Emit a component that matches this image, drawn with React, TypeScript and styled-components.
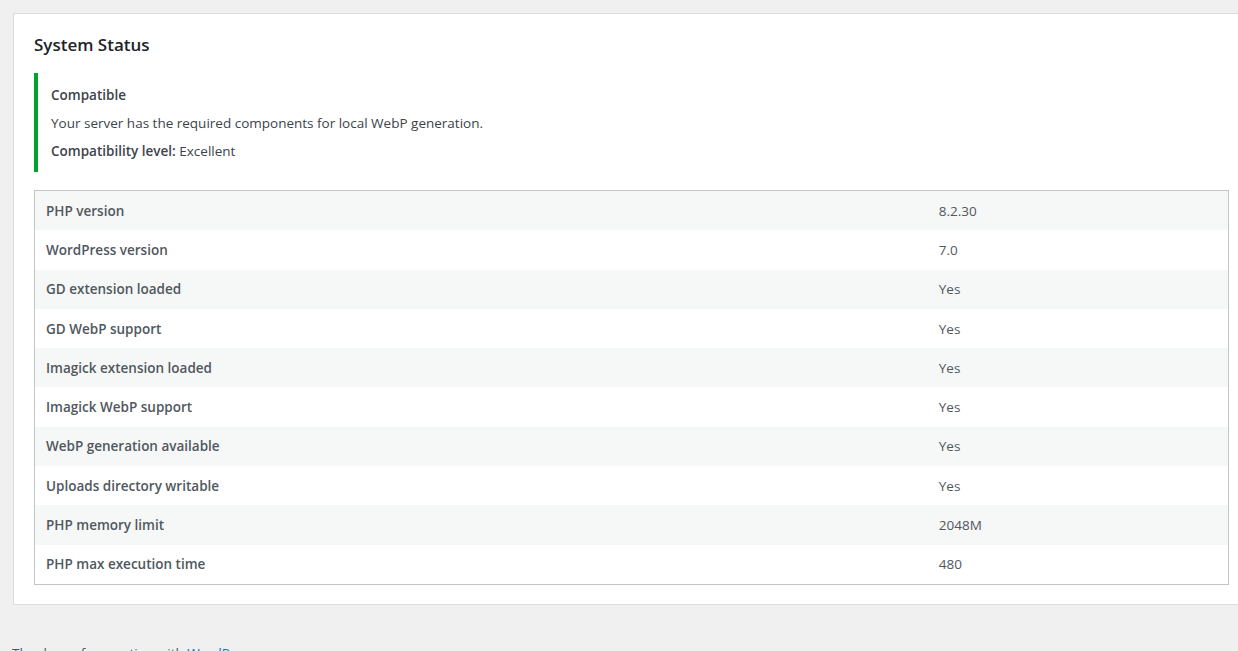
import React from "react";
import styled, { createGlobalStyle } from "styled-components";

const Global = createGlobalStyle`
  html, body { margin: 0; padding: 0; }
  body {
    background: #f0f0f1;
    overflow: hidden;
    font-family: "Open Sans", "Noto Sans", sans-serif;
    font-size: 13.5px;
    color: #3c434a;
  }
`;

const Page = styled.div`
  padding-top: 13px;
  width: 1300px;
`;

const Card = styled.section`
  box-sizing: border-box;
  margin-left: 13px;
  width: 1237px;
  background: #fff;
  border: 1px solid #dcdcde;
  padding: 19px 20px 19px 20px;
`;

const Title = styled.h2`
  margin: 0 0 16px 0;
  font-size: 17px;
  line-height: 24px;
  font-weight: 600;
  color: #1d2327;
`;

const Notice = styled.div`
  border-left: 4px solid #00a32a;
  padding: 12px 0 11px 13px;
  display: flex;
  flex-direction: column;
  gap: 8px;
`;

const NoticeLine = styled.p<{ $bold?: boolean }>`
  margin: 0;
  line-height: 20px;
  font-weight: ${(p) => (p.$bold ? 600 : 400)};
  color: #3c434a;
`;

const Strong = styled.strong`
  font-weight: 600;
`;

const Table = styled.div`
  margin-top: 18px;
  border: 1px solid #c3c4c7;
  display: flex;
  flex-direction: column;
`;

const Row = styled.div<{ $odd: boolean }>`
  display: grid;
  grid-template-columns: 75% 25%;
  height: 39.3px;
  align-items: center;
  background: ${(p) => (p.$odd ? "#f6f7f7" : "#fff")};
`;

const Label = styled.div`
  padding-left: 11px;
  font-weight: 600;
  color: #50575e;
`;

const Value = styled.div`
  padding-left: 9px;
  color: #50575e;
`;

const Footer = styled.div`
  padding: 38px 0 0 12px;
  color: #50575e;
  line-height: 20px;
`;

const Link = styled.a`
  color: #2271b1;
  text-decoration: underline;
`;

const rows: [string, string][] = [
  ["PHP version", "8.2.30"],
  ["WordPress version", "7.0"],
  ["GD extension loaded", "Yes"],
  ["GD WebP support", "Yes"],
  ["Imagick extension loaded", "Yes"],
  ["Imagick WebP support", "Yes"],
  ["WebP generation available", "Yes"],
  ["Uploads directory writable", "Yes"],
  ["PHP memory limit", "2048M"],
  ["PHP max execution time", "480"],
];

export default function App() {
  return (
    <>
      <Global />
      <Page>
        <Card>
          <Title>System Status</Title>
          <Notice>
            <NoticeLine $bold>Compatible</NoticeLine>
            <NoticeLine>Your server has the required components for local WebP generation.</NoticeLine>
            <NoticeLine>
              <Strong>Compatibility level:</Strong> Excellent
            </NoticeLine>
          </Notice>
          <Table>
            {rows.map(([k, v], i) => (
              <Row key={k} $odd={i % 2 === 0}>
                <Label>{k}</Label>
                <Value>{v}</Value>
              </Row>
            ))}
          </Table>
        </Card>
        <Footer>
          Thank you for creating with <Link href="#">WordPress</Link>.
        </Footer>
      </Page>
    </>
  );
}
